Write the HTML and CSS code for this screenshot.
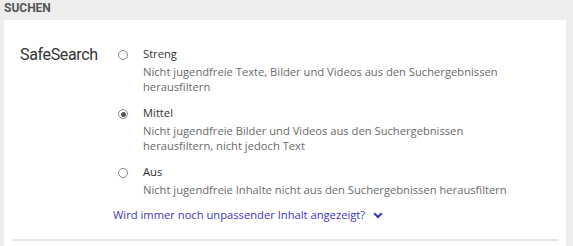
FILE: index.html
```html
<!DOCTYPE html>
<html lang="de">
<head>
<meta charset="utf-8">
<link rel="stylesheet" href="styles.css">
</head>
<body>
<div class="page">
  <div class="section-title">SUCHEN</div>
  <div class="card">
    <div class="row">
      <div class="row-label">SafeSearch</div>
      <div class="options">
        <div class="option">
          <span class="radio"></span>
          <div class="option-text">
            <div class="option-title">Streng</div>
            <div class="option-desc">Nicht jugendfreie Texte, Bilder und Videos aus den Suchergebnissen herausfiltern</div>
          </div>
        </div>
        <div class="option">
          <span class="radio checked"></span>
          <div class="option-text">
            <div class="option-title">Mittel</div>
            <div class="option-desc">Nicht jugendfreie Bilder und Videos aus den Suchergebnissen herausfiltern, nicht jedoch Text</div>
          </div>
        </div>
        <div class="option">
          <span class="radio"></span>
          <div class="option-text">
            <div class="option-title">Aus</div>
            <div class="option-desc">Nicht jugendfreie Inhalte nicht aus den Suchergebnissen herausfiltern</div>
          </div>
        </div>
        <a class="more-link" href="#">Wird immer noch unpassender Inhalt angezeigt?<svg class="chev" width="10" height="7" viewBox="0 0 10 7"><path d="M1.2 1.3 L5 5 L8.8 1.3" fill="none" stroke="#2b34c8" stroke-width="2"/></svg></a>
      </div>
    </div>
    <div class="divider"></div>
  </div>
</div>
</body>
</html>
```
FILE: styles.css
```css
html, body { margin: 0; padding: 0; }
body { background: #ededed; width: 573px; height: 246px; overflow: hidden; }
.page { padding: 0 7px 0 4px; height: 246px; display: flex; flex-direction: column; }
.section-title {
  font-family: Roboto, "Liberation Sans", sans-serif;
  font-weight: 700; font-size: 12px; color: #555;
  height: 20px; line-height: 16px; flex: none;
}
.card { background: #fff; padding-top: 24px; flex: 1; overflow: hidden; }
.row { display: flex; padding-left: 16px; }
.row-label {
  font-family: Roboto, "Liberation Sans", sans-serif;
  font-size: 16px; letter-spacing: -0.35px; color: #333;
  width: 93px; flex: none; line-height: 20px; padding-top: 1px;
}
.options { display: flex; flex-direction: column; }
.option { display: flex; padding-left: 5px; margin-bottom: 9px; }
.option:last-of-type { margin-bottom: 10px; }
.radio {
  width: 8px; height: 8px; border: 1px solid #8a8a8a; border-radius: 50%;
  margin: 6px 15px 0 0; flex: none; position: relative; box-sizing: content-box;
}
.radio.checked::after {
  content: ""; position: absolute; left: 1.5px; top: 1.5px; width: 5px; height: 5px;
  border-radius: 50%; background: #555;
}
.option-text { font-family: "Open Sans", sans-serif; font-size: 11.2px; }
.option-title { color: #333; line-height: 20px; }
.option-desc { color: #6a6a6a; width: 375px; line-height: 15px; }
.more-link {
  font-family: "Open Sans", sans-serif; font-size: 11.2px; color: #3d33c2;
  text-decoration: none; line-height: 16px;
}
.chev { margin-left: 8px; vertical-align: 0; }
.divider { height: 2px; background: #e6e6e6; margin: 16px 8px 0 8px; }
```
